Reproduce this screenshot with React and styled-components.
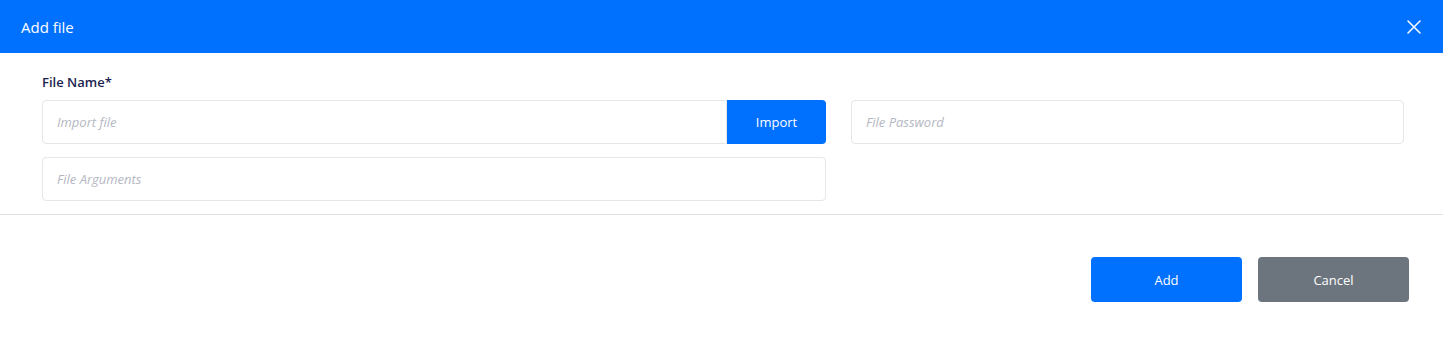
import React from "react";
import styled, { createGlobalStyle } from "styled-components";

const GlobalStyle = createGlobalStyle`
  html, body {
    margin: 0;
    padding: 0;
    background: #ffffff;
    font-family: "Open Sans", "Noto Sans", sans-serif;
  }
  * {
    box-sizing: border-box;
  }
`;

const App = () => {
  return (
    <>
      <GlobalStyle />
      <Modal>
        <Header>
          <Title>Add file</Title>
          <CloseButton aria-label="Close">
            <svg width="14" height="14" viewBox="0 0 14 14">
              <path
                d="M1 1 L13 13 M13 1 L1 13"
                stroke="#ffffff"
                strokeWidth="1.5"
                strokeLinecap="round"
              />
            </svg>
          </CloseButton>
        </Header>
        <Body>
          <Grid>
            <Field>
              <Label>File Name*</Label>
              <InputGroup>
                <Input placeholder="Import file" joined />
                <ImportButton>Import</ImportButton>
              </InputGroup>
            </Field>
            <Field>
              <Input placeholder="File Password" />
            </Field>
            <Field>
              <Input placeholder="File Arguments" />
            </Field>
          </Grid>
        </Body>
        <Footer>
          <Button>Add</Button>
          <Button variant="secondary">Cancel</Button>
        </Footer>
      </Modal>
    </>
  );
};

export default App;

const Modal = styled.div`
  width: 100%;
  height: 342px;
  background: #ffffff;
  display: flex;
  flex-direction: column;
`;

const Header = styled.div`
  height: 53px;
  flex: none;
  background: #0070ff;
  display: flex;
  align-items: center;
  justify-content: space-between;
  padding: 0 22px 0 21px;
`;

const Title = styled.div`
  color: #ffffff;
  font-size: 15px;
  font-weight: 400;
`;

const CloseButton = styled.button`
  background: none;
  border: none;
  padding: 0;
  display: flex;
  cursor: pointer;
`;

const Body = styled.div`
  padding: 20px 39px 13px 42px;
  border-bottom: 1px solid #dee2e6;
`;

const Grid = styled.div`
  display: grid;
  grid-template-columns: 784fr 553fr;
  column-gap: 25px;
  row-gap: 13px;
  align-items: end;
`;

const Field = styled.div`
  display: flex;
  flex-direction: column;
`;

const Label = styled.label`
  font-size: 13px;
  font-weight: 600;
  color: #1c1f4f;
  line-height: 18px;
  margin-bottom: 9px;
`;

const InputGroup = styled.div`
  display: flex;
`;

const Input = styled.input`
  flex: ${(p) => (p.joined ? "1 1 auto" : "none")};
  width: 100%;
  min-width: 0;
  height: 44px;
  border: 1px solid #e4e6ea;
  border-radius: ${(p) => (p.joined ? "4px 0 0 4px" : "4px")};
  padding: 0 14px;
  font-family: "Open Sans", "Noto Sans", sans-serif;
  font-size: 13px;
  color: #333;
  outline: none;

  &::placeholder {
    color: #b4b7c2;
    font-style: italic;
  }
`;

const ImportButton = styled.button`
  flex: none;
  width: 99px;
  height: 44px;
  border: none;
  border-radius: 0 4px 4px 0;
  background: #0070ff;
  color: #ffffff;
  font-family: "Open Sans", "Noto Sans", sans-serif;
  font-size: 13px;
  cursor: pointer;
`;

const Footer = styled.div`
  display: flex;
  justify-content: flex-end;
  gap: 16px;
  padding: 42px 34px 0;
`;

const Button = styled.button`
  width: 151px;
  height: 45px;
  border: none;
  border-radius: 4px;
  background: ${(p) => (p.variant === "secondary" ? "#6c757d" : "#0070ff")};
  color: #ffffff;
  font-family: "Open Sans", "Noto Sans", sans-serif;
  font-size: 13px;
  cursor: pointer;
`;
